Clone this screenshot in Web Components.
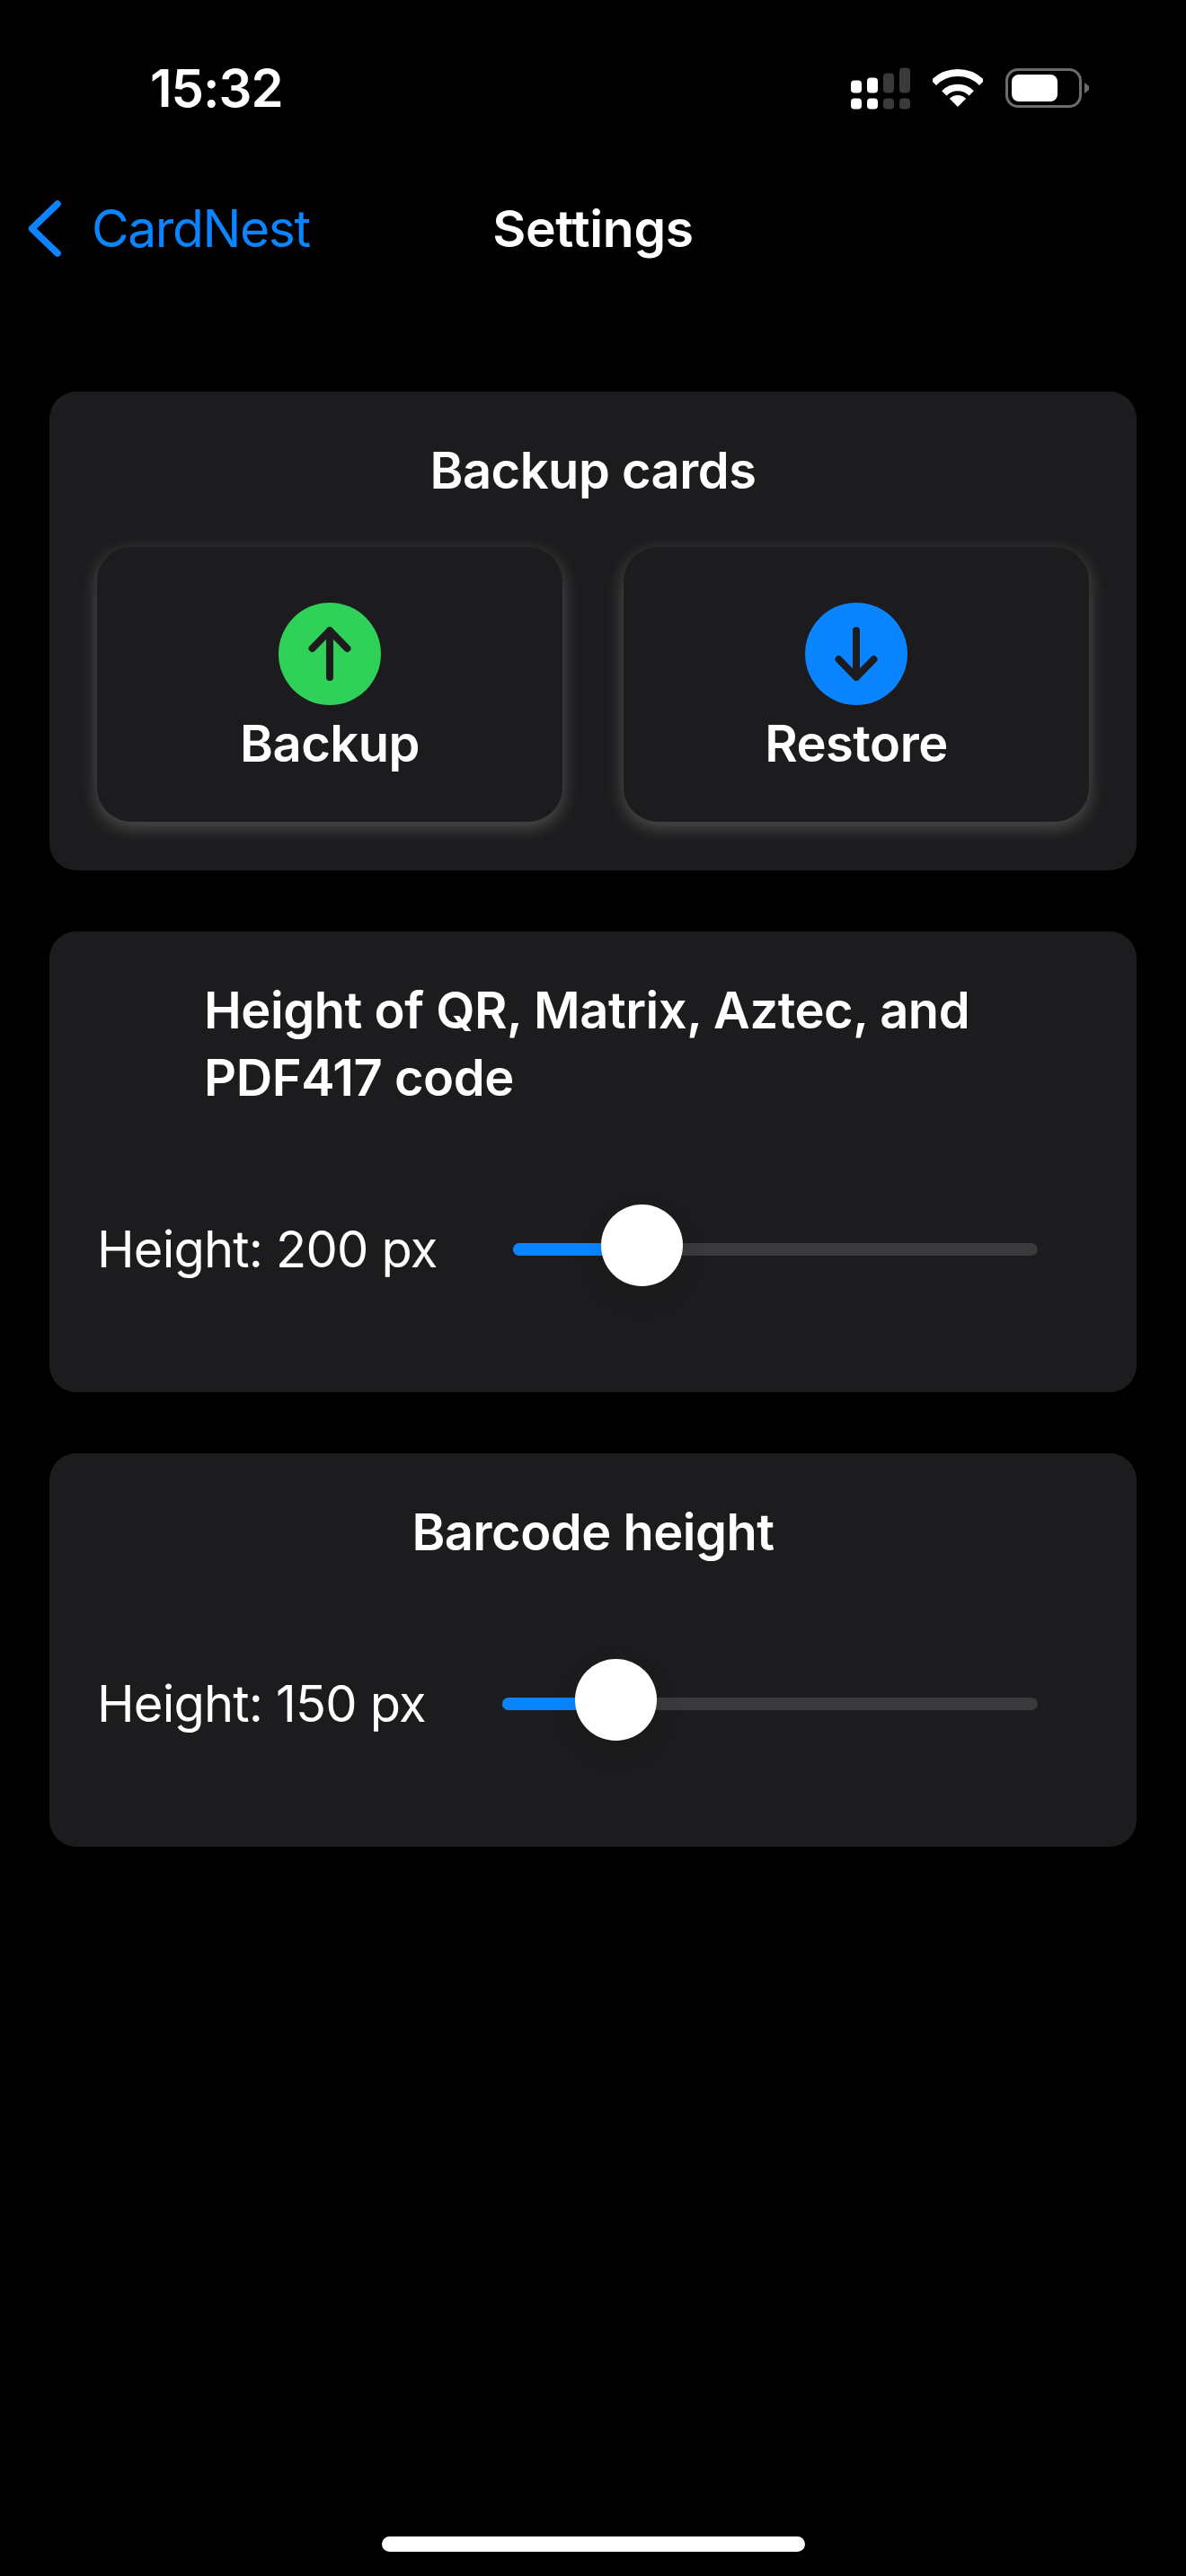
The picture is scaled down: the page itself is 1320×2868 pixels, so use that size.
<!doctype html>
<html>
<head>
<meta charset="utf-8">
<title>Settings</title>
<style>
  html, body { margin: 0; background: #000; }
  body { font-family: Inter, "Liberation Sans", sans-serif; color: #fff; }
</style>
</head>
<body>
<app-screen>
  <status-bar slot="top" time="15:32"></status-bar>
  <nav-bar slot="top" back="CardNest" heading="Settings"></nav-bar>

  <settings-card heading="Backup cards">
    <div style="display:flex;gap:68px;margin-top:47px">
      <backup-button kind="up" color="#30d158">Backup</backup-button>
      <backup-button kind="down" color="#0a84ff">Restore</backup-button>
    </div>
  </settings-card>

  <settings-card heading="Height of QR, Matrix, Aztec, and PDF417 code" narrow>
    <height-slider pos="0.1976">Height: 200 px</height-slider>
  </settings-card>

  <settings-card heading="Barcode height">
    <height-slider pos="0.1607">Height: 150 px</height-slider>
  </settings-card>
</app-screen>

<script>
  customElements.define('app-screen', class extends HTMLElement {
    constructor() {
      super();
      this.attachShadow({mode: 'open'}).innerHTML = `
        <style>
          :host { display: flex; flex-direction: column; height: 2868px; overflow: hidden; }
          main { display: flex; flex-direction: column; gap: 68px; padding: 124px 55px 0; }
          .home { margin: auto auto 27px; width: 471px; height: 17px; border-radius: 9px; background: #fff; }
        </style>
        <slot name="top"></slot>
        <main><slot></slot></main>
        <div class="home"></div>`;
    }
  });

  customElements.define('status-bar', class extends HTMLElement {
    constructor() {
      super();
      // two sim signal: top row bars + bottom row dots
      const bars = [[0, 14, 1], [18, 17, 1], [36, 22, 0], [54, 28, 0]].map(([x, h, on]) => {
        const c = on ? '#fff' : '#3a3a3c';
        return `<rect x="${x}" y="${28 - h}" width="12" height="${h}" rx="4" fill="${c}"/>
                <rect x="${x}" y="34" width="12" height="12" rx="4" fill="${c}"/>`;
      }).join('');
      this.attachShadow({mode: 'open'}).innerHTML = `
        <style>
          :host { display: flex; align-items: center; height: 196px; padding: 0 108px 0 167px; box-sizing: border-box; }
          .time { font-size: 58px; font-weight: 600; letter-spacing: -1px; line-height: 1; margin-right: auto; }
          .icons { display: flex; align-items: center; gap: 25px; }
          svg { display: block; }
        </style>
        <span class="time">${this.getAttribute('time')}</span>
        <div class="icons">
          <svg width="66" height="47" viewBox="0 0 66 46">${bars}</svg>
          <svg width="56" height="42" viewBox="0 0 56 42" fill="none" stroke="#fff">
            <path d="M1.13 15.13a38 38 0 0 1 53.74 0" stroke-width="8"/>
            <path d="M12.8 26.8a21.5 21.5 0 0 1 30.4 0" stroke-width="7.5"/>
            <path d="M18.8 32.8a13 13 0 0 1 18.4 0L29 41a1.4 1.4 0 0 1-2 0z" fill="#fff" stroke="none"/>
          </svg>
          <svg width="93" height="44" viewBox="0 0 93 44">
            <rect x="1.5" y="1.5" width="82" height="41" rx="12.5" fill="none" stroke="#6c6c6e" stroke-width="3"/>
            <rect x="7" y="7" width="51" height="30" rx="8" fill="#fff"/>
            <path d="M88 16l4 3.2a3 3 0 0 1 0 5.6L88 28z" fill="#6c6c6e"/>
          </svg>
        </div>`;
    }
  });

  customElements.define('nav-bar', class extends HTMLElement {
    constructor() {
      super();
      this.attachShadow({mode: 'open'}).innerHTML = `
        <style>
          :host { display: grid; grid-template-columns: 1fr auto 1fr; align-items: center; height: 116px; font-size: 57px; line-height: 1; }
          .back { display: flex; align-items: center; gap: 34px; padding-left: 31px; color: #0a84ff; letter-spacing: -1.4px; }
          h1 { margin: 0; font: inherit; font-weight: 600; letter-spacing: -.3px; }
          svg { display: block; }
        </style>
        <div class="back">
          <svg width="37" height="63" viewBox="0 0 37 63" fill="none" stroke="#0a84ff" stroke-width="7.5" stroke-linecap="round" stroke-linejoin="round">
            <polyline points="33,4 4.5,31.5 33,59"/>
          </svg>
          <span>${this.getAttribute('back')}</span>
        </div>
        <h1>${this.getAttribute('heading')}</h1>
        <div></div>`;
    }
  });

  customElements.define('settings-card', class extends HTMLElement {
    constructor() {
      super();
      this.attachShadow({mode: 'open'}).innerHTML = `
        <style>
          :host { display: block; background: #1c1c1e; border-radius: 30px; padding: 51px 53px 54px; }
          h2 { margin: 0 auto; font-size: 56px; font-weight: 600; line-height: 75px; text-align: center; letter-spacing: -.5px; }
          :host([narrow]) h2 { width: 866px; text-align: left; letter-spacing: -.45px; }
        </style>
        <h2>${this.getAttribute('heading')}</h2>
        <slot></slot>`;
    }
  });

  customElements.define('backup-button', class extends HTMLElement {
    constructor() {
      super();
      const line = this.getAttribute('kind') == 'up'
        ? '<path d="M57 83V31M37.5 51L57 31l19.5 20"/>'
        : '<path d="M57 31v52M37.5 63L57 83l19.5-20"/>';
      this.attachShadow({mode: 'open'}).innerHTML = `
        <style>
          :host { flex: 1; display: flex; flex-direction: column; align-items: center; gap: 11px; height: 306px; padding-top: 62px; box-sizing: border-box;
                  border-radius: 38px; background: #1c1c1e; box-shadow: 0 6px 20px rgba(255,255,255,.24); font-size: 56px; font-weight: 600; line-height: 64px; letter-spacing: -.5px; }
          svg { display: block; }
        </style>
        <svg width="114" height="114" viewBox="0 0 114 114" fill="none">
          <circle cx="57" cy="57" r="57" fill="${this.getAttribute('color')}"/>
          <g stroke="#1c1c1e" stroke-width="8" stroke-linecap="round" stroke-linejoin="round">${line}</g>
        </svg>
        <span><slot></slot></span>`;
    }
  });

  customElements.define('height-slider', class extends HTMLElement {
    constructor() {
      super();
      this.attachShadow({mode: 'open'}).innerHTML = `
        <style>
          :host { display: flex; align-items: center; gap: 85px; height: 94px; margin: 106px 0 58px; padding-right: 57px; font-size: 56px; font-weight: 400; letter-spacing: -.8px; --pos: ${this.getAttribute('pos')}; }
          .label { white-space: nowrap; }
          .track { position: relative; flex: 1; height: 14px; border-radius: 7px; background: #3a3a3c; }
          .fill { position: absolute; left: 0; top: 0; bottom: 0; border-radius: 7px; background: #0a84ff;
                  width: calc(45.5px + (100% - 91px) * var(--pos)); }
          .thumb { position: absolute; top: -43px; width: 91px; height: 91px; border-radius: 50%; background: #fff;
                   left: calc((100% - 91px) * var(--pos)); box-shadow: 0 12px 30px rgba(0,0,0,.1); }
        </style>
        <span class="label"><slot></slot></span>
        <div class="track"><div class="fill"></div><div class="thumb"></div></div>`;
    }
  });
</script>
</body>
</html>
